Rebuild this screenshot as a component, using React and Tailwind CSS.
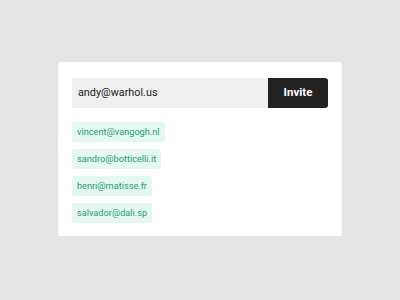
export default function App() {
  const emails = [
    "vincent@vangogh.nl",
    "sandro@botticelli.it",
    "henri@matisse.fr",
    "salvador@dali.sp",
  ];

  return (
    <div
      className="w-[400px] h-[300px] bg-[#e5e5e5] pt-[62px] pl-[58px]"
      style={{ fontFamily: "Roboto, 'Liberation Sans', sans-serif" }}
    >
      <div className="w-[284px] bg-white rounded-[3px] pt-4 pb-[13px] px-[14px]">
        <div className="flex h-[30px]">
          <div className="flex-1 bg-[#f0f0f0] flex items-center pl-[6px] text-[10.8px] text-[#1a1a1a]">
            andy@warhol.us
          </div>
          <button className="w-[60px] bg-[#222222] text-white text-[11.5px] font-bold rounded-r-[3px]">
            Invite
          </button>
        </div>
        <div className="mt-[14px] flex flex-col items-start gap-[7px]">
          {emails.map((email) => (
            <span
              key={email}
              className="h-[20px] flex items-center px-[5px] rounded-[3px] bg-[#e4f7f1] text-[#1e9c78] text-[9.2px]"
            >
              {email}
            </span>
          ))}
        </div>
      </div>
    </div>
  );
}
